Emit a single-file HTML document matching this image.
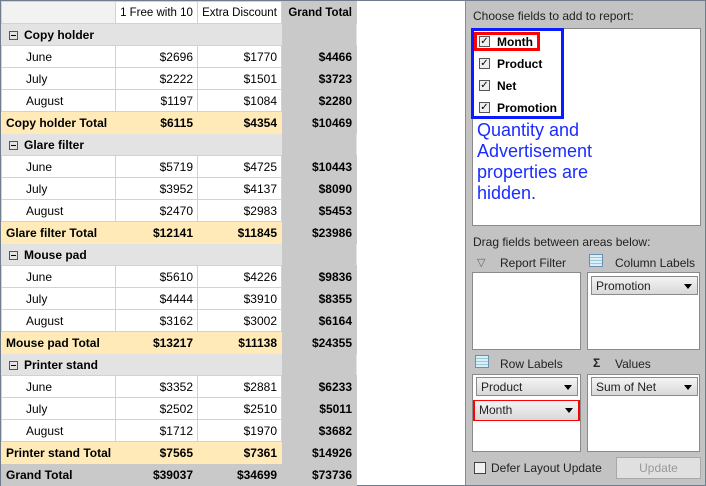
<!DOCTYPE html>
<html><head><style>
*{box-sizing:border-box;margin:0;padding:0}
body{width:706px;height:486px;background:#fff;position:relative;overflow:hidden;font-family:"Liberation Sans",sans-serif;font-size:12px;color:#000}
#frame{position:absolute;left:0;top:0;width:706px;height:486px;border:1px solid #6f7d8c}
table{position:absolute;left:1px;top:1px;border-collapse:collapse;table-layout:fixed;width:355px}
td{height:22px;border:1px solid #d2d2d2;padding:0 4px;white-space:nowrap;font-size:12px;overflow:hidden}
tr.h td{font-size:11.5px;padding:0 2px;text-align:center}
td.r{text-align:right}
td.gt{background:#c9c9c9;font-weight:bold;text-align:right;border-color:#c9c9c9}
tr.h td{background:#fff}
tr.h td:first-child{background:#f2f2f2}
tr.h td.gt{background:#c9c9c9;text-align:right;padding-right:4px}
tr.g td{background:#e3e3e3;font-weight:bold;border-left-color:#e3e3e3;border-right-color:#e3e3e3}
tr.g td.gt{background:#c9c9c9}
tr.t td{background:#ffeab8;font-weight:bold;text-align:right;border-color:#ffeab8}
tr.t td:first-child{text-align:left}
tr.t td.gt{background:#c9c9c9;border-color:#c9c9c9}
tr.G td{background:#c9c9c9;font-weight:bold;text-align:right;border-color:#c9c9c9}
tr.G td:first-child{text-align:left}
td.m{padding-left:24px}
.bx{display:inline-block;width:9px;height:9px;border:1px solid #555;position:relative;margin:0 6px 0 3px;vertical-align:-1px}
.bx:after{content:"";position:absolute;left:1px;top:3px;width:5px;height:1px;background:#000}
#panel{position:absolute;left:465px;top:1px;width:240px;height:484px;background:#c3c3c3;border-left:1px solid #8a8a8a}
.a{position:absolute}
.box{position:absolute;background:#fff;border:1px solid #8a8a8a}
.cb{position:absolute;width:11px;height:11px;border:1px solid #555;background:#eee;font-size:10px;line-height:9px;text-align:center}
.fld{position:absolute;font-weight:bold;font-size:12px}
.dd{position:absolute;height:19px;border:1px solid #8a8a8a;background:linear-gradient(#f4f4f4,#d8d8d8);font-size:12px;padding:2px 4px;color:#222}
.dd:after{content:"";position:absolute;right:5px;top:7px;border-left:4px solid transparent;border-right:4px solid transparent;border-top:5px solid #000}
.grid{position:absolute;width:14px;height:13px;border:1px solid #6a8fb0;background:repeating-linear-gradient(#dbeefc 0 2px,#9cc 2px 3px)}
</style></head><body>
<div id="frame"></div>
<table>
<colgroup><col style="width:114px"><col style="width:82px"><col style="width:84px"><col style="width:75px"></colgroup>
<tr class="h"><td></td><td>1 Free with 10</td><td>Extra Discount</td><td class="gt">Grand Total</td></tr>
<tr class="g"><td colspan="3"><span class="bx"></span>Copy holder</td><td class="gt"></td></tr>
<tr><td class="m">June</td><td class="r">$2696</td><td class="r">$1770</td><td class="gt">$4466</td></tr>
<tr><td class="m">July</td><td class="r">$2222</td><td class="r">$1501</td><td class="gt">$3723</td></tr>
<tr><td class="m">August</td><td class="r">$1197</td><td class="r">$1084</td><td class="gt">$2280</td></tr>
<tr class="t"><td>Copy holder Total</td><td>$6115</td><td>$4354</td><td class="gt">$10469</td></tr>
<tr class="g"><td colspan="3"><span class="bx"></span>Glare filter</td><td class="gt"></td></tr>
<tr><td class="m">June</td><td class="r">$5719</td><td class="r">$4725</td><td class="gt">$10443</td></tr>
<tr><td class="m">July</td><td class="r">$3952</td><td class="r">$4137</td><td class="gt">$8090</td></tr>
<tr><td class="m">August</td><td class="r">$2470</td><td class="r">$2983</td><td class="gt">$5453</td></tr>
<tr class="t"><td>Glare filter Total</td><td>$12141</td><td>$11845</td><td class="gt">$23986</td></tr>
<tr class="g"><td colspan="3"><span class="bx"></span>Mouse pad</td><td class="gt"></td></tr>
<tr><td class="m">June</td><td class="r">$5610</td><td class="r">$4226</td><td class="gt">$9836</td></tr>
<tr><td class="m">July</td><td class="r">$4444</td><td class="r">$3910</td><td class="gt">$8355</td></tr>
<tr><td class="m">August</td><td class="r">$3162</td><td class="r">$3002</td><td class="gt">$6164</td></tr>
<tr class="t"><td>Mouse pad Total</td><td>$13217</td><td>$11138</td><td class="gt">$24355</td></tr>
<tr class="g"><td colspan="3"><span class="bx"></span>Printer stand</td><td class="gt"></td></tr>
<tr><td class="m">June</td><td class="r">$3352</td><td class="r">$2881</td><td class="gt">$6233</td></tr>
<tr><td class="m">July</td><td class="r">$2502</td><td class="r">$2510</td><td class="gt">$5011</td></tr>
<tr><td class="m">August</td><td class="r">$1712</td><td class="r">$1970</td><td class="gt">$3682</td></tr>
<tr class="t"><td>Printer stand Total</td><td>$7565</td><td>$7361</td><td class="gt">$14926</td></tr>
<tr class="G"><td>Grand Total</td><td>$39037</td><td>$34699</td><td>$73736</td></tr>
</table>

<div id="panel">
<div class="a" style="left:7px;top:8px;color:#222">Choose fields to add to report:</div>
<div class="box" style="left:6px;top:27px;width:229px;height:198px"></div>
<div class="a" style="left:5px;top:27px;width:93px;height:91px;border:3px solid #0a1cff"></div>
<div class="a" style="left:8px;top:31px;width:66px;height:19px;border:3px solid #f00"></div>
<div class="cb" style="left:13px;top:35px">✓</div><div class="fld" style="left:31px;top:34px">Month</div>
<div class="cb" style="left:13px;top:57px">✓</div><div class="fld" style="left:31px;top:56px">Product</div>
<div class="cb" style="left:13px;top:79px">✓</div><div class="fld" style="left:31px;top:78px">Net</div>
<div class="cb" style="left:13px;top:101px">✓</div><div class="fld" style="left:31px;top:100px">Promotion</div>
<div class="a" style="left:11px;top:119px;color:#1a2cff;font-size:18px;line-height:21px">Quantity and<br>Advertisement<br>properties are<br>hidden.</div>

<div class="a" style="left:7px;top:234px;color:#222">Drag fields between areas below:</div>
<div class="a" style="left:11px;top:255px;color:#666;font-size:11px">▽</div>
<div class="a" style="left:34px;top:255px;color:#222">Report Filter</div>
<div class="grid" style="left:123px;top:253px"></div>
<div class="a" style="left:149px;top:255px;color:#222">Column Labels</div>
<div class="box" style="left:6px;top:271px;width:109px;height:78px"></div>
<div class="box" style="left:121px;top:271px;width:113px;height:78px"></div>
<div class="dd" style="left:125px;top:275px;width:107px">Promotion</div>

<div class="grid" style="left:9px;top:354px"></div>
<div class="a" style="left:34px;top:356px;color:#222">Row Labels</div>
<div class="a" style="left:127px;top:355px;font-weight:bold;color:#222">Σ</div>
<div class="a" style="left:149px;top:356px;color:#222">Values</div>
<div class="box" style="left:6px;top:373px;width:109px;height:78px"></div>
<div class="box" style="left:121px;top:373px;width:113px;height:78px"></div>
<div class="dd" style="left:10px;top:376px;width:102px">Product</div>
<div class="a" style="left:7px;top:399px;width:107px;height:21px;border:2px solid #f00"></div>
<div class="dd" style="left:9px;top:400px;width:103px;height:19px;border:none">Month</div>
<div class="dd" style="left:125px;top:376px;width:107px">Sum of Net</div>

<div class="a" style="left:8px;top:461px;width:12px;height:12px;border:1px solid #444;background:#f2f2f2"></div>
<div class="a" style="left:25px;top:460px;color:#222">Defer Layout Update</div>
<div class="a" style="left:150px;top:456px;width:85px;height:22px;border:1px solid #a8a8a8;background:#e0e0e0;color:#999;text-align:center;line-height:20px">Update</div>
</div>
</body></html>
